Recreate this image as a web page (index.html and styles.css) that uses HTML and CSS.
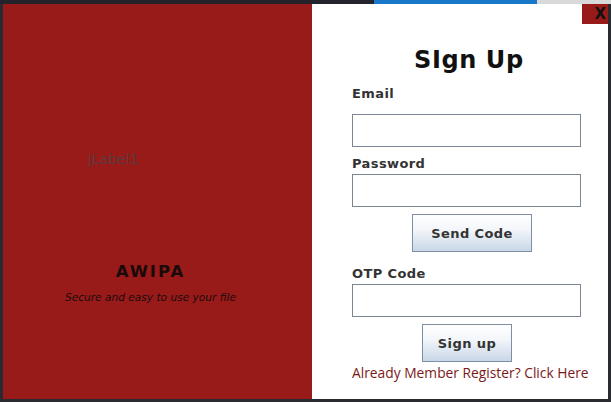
FILE: index.html
```html
<!DOCTYPE html>
<html>
<head>
<meta charset="utf-8">
<link rel="stylesheet" href="styles.css">
</head>
<body>
<div class="screen">
  <div class="topbar">
    <div class="seg-dark"></div>
    <div class="seg-blue"></div>
    <div class="seg-gray"></div>
  </div>
  <div class="main">
    <div class="left">
      <div class="jlabel">jLabel1</div>
      <div class="brand">AWIPA</div>
      <div class="tagline">Secure and easy to use your file</div>
    </div>
    <div class="right">
      <h1 class="title">SIgn Up</h1>
      <label class="label label-email">Email</label>
      <input class="field field-email" type="text">
      <label class="label label-pass">Password</label>
      <input class="field" type="password">
      <button class="btn btn-send">Send Code</button>
      <label class="label label-otp">OTP Code</label>
      <input class="field" type="text">
      <button class="btn btn-sign">Sign up</button>
      <a class="link">Already Member Register? Click Here</a>
    </div>
    <div class="close">X</div>
  </div>
</div>
</body>
</html>
```
FILE: styles.css
```css
* { box-sizing: border-box; }
html, body { margin: 0; padding: 0; }
body {
  width: 611px;
  height: 402px;
  background: #2a2a31;
  overflow: hidden;
  font-family: "DejaVu Sans", sans-serif;
}
.screen {
  width: 611px;
  height: 402px;
  display: flex;
  flex-direction: column;
}
.topbar {
  height: 4px;
  display: flex;
}
.seg-dark { width: 374px; background: #24232b; }
.seg-blue { width: 163px; background: #1877c9; }
.seg-gray { flex: 1; background: #d9d9d9; }
.main {
  position: relative;
  display: flex;
  height: 395px;
  padding: 0 3px 0 3px;
}
.left {
  width: 309px;
  background: #981b1a;
  display: flex;
  flex-direction: column;
  align-items: center;
}
.jlabel {
  margin-top: 147px;
  align-self: flex-start;
  padding-left: 85px;
  font-size: 13.5px;
  letter-spacing: 0.3px;
  color: #5a3c3e;
}
.brand {
  margin-top: 95px;
  margin-left: -14px;
  font-weight: bold;
  font-size: 16.5px;
  letter-spacing: 2px;
  color: #1a0a0a;
}
.tagline {
  margin-top: 10px;
  margin-left: -14px;
  font-style: italic;
  font-size: 10.6px;
  color: #1a0a0a;
}
.right {
  flex: 1;
  background: #ffffff;
  display: flex;
  flex-direction: column;
  align-items: flex-start;
  padding-left: 40px;
}
.title {
  margin: 40px 0 0 62px;
  font-size: 24px;
  font-weight: bold;
  letter-spacing: 0.6px;
  color: #111;
  line-height: 32px;
}
.label {
  font-size: 13px;
  font-weight: bold;
  color: #333;
  line-height: 16px;
  letter-spacing: 0.4px;
}
.label-email { margin-top: 10px; }
.field {
  display: block;
  width: 229px;
  height: 33px;
  border: 1px solid #7a8694;
  background: #fff;
  margin: 2px 0 0 0;
  padding: 0;
}
.field-email { margin-top: 12px; }
.label-pass { margin-top: 9px; }
.btn {
  height: 38px;
  border: 1px solid #7e8fa3;
  background: linear-gradient(#ffffff, #f3f6fa 40%, #c9d7e8);
  font-family: "DejaVu Sans", sans-serif;
  font-weight: bold;
  font-size: 13px;
  letter-spacing: 0.4px;
  color: #333;
  padding: 0;
  margin-top: 7px;
}
.btn-send { width: 120px; margin-left: 60px; }
.btn-sign { width: 90px; margin-left: 70px; }
.label-otp { margin-top: 14px; }
.link {
  margin-top: 1px;
  font-family: "Open Sans", sans-serif;
  font-size: 13.8px;
  color: #7a1818;
  white-space: nowrap;
}
.close {
  position: absolute;
  top: 0;
  right: 3px;
  width: 26px;
  height: 20px;
  background: #981b1a;
  color: #111;
  font-weight: bold;
  font-size: 15px;
  display: flex;
  align-items: center;
  justify-content: flex-end;
  padding-right: 2px;
}
```
